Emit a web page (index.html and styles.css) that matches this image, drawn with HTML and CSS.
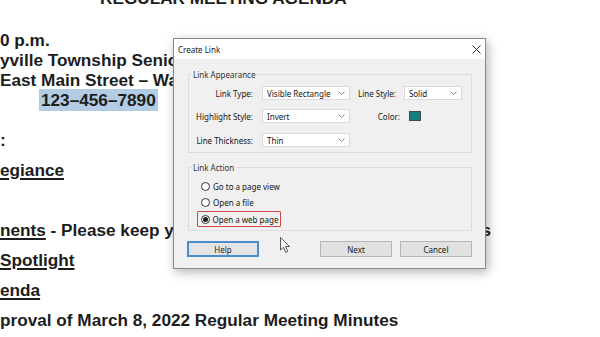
FILE: index.html
```html
<!DOCTYPE html>
<html lang="en">
<head>
    <meta charset="UTF-8">
    <meta name="viewport" content="width=device-width, initial-scale=1.0">
    <title>Create Link</title>
    <link rel="stylesheet" href="styles.css">
</head>
<body>
    <div class="doc">
        <div class="block-top">
            <p class="heading">REGULAR MEETING AGENDA</p>
            <p class="blank">&nbsp;</p>
            <p>0 p.m.</p>
            <p>yville Township Senior Center</p>
            <p>East Main Street &ndash; Waynesville, Ohio</p>
            <p><span class="phone">123&ndash;456&ndash;7890</span></p>
        </div>
        <div class="block-items">
            <p>:</p>
            <p><u>egiance</u></p>
            <p class="blank">&nbsp;</p>
            <p><u>nents</u> - Please keep your comments limited to three minutes</p>
            <p><u>Spotlight</u></p>
            <p><u>enda</u></p>
            <p>proval of March 8, 2022 Regular Meeting Minutes</p>
        </div>
    </div>

    <!-- dialog floats over the document -->
    <div class="dialog">
        <div class="titlebar">
            <span>Create Link</span>
            <svg class="close" width="9" height="9" viewBox="0 0 9 9"><path d="M0.5 0.5 L8.5 8.5 M8.5 0.5 L0.5 8.5" stroke="#333" stroke-width="1"/></svg>
        </div>
        <div class="dialog-body">
            <fieldset class="group appearance">
                <legend>Link Appearance</legend>
                <div class="row">
                    <span class="lbl">Link Type:</span>
                    <div class="select wide"><span>Visible Rectangle</span><svg width="7" height="4" viewBox="0 0 7 4"><path d="M0.5 0.5 L3.5 3.5 L6.5 0.5" fill="none" stroke="#888"/></svg></div>
                    <span class="lbl2">Line Style:</span>
                    <div class="select narrow"><span>Solid</span><svg width="7" height="4" viewBox="0 0 7 4"><path d="M0.5 0.5 L3.5 3.5 L6.5 0.5" fill="none" stroke="#888"/></svg></div>
                </div>
                <div class="row">
                    <span class="lbl">Highlight Style:</span>
                    <div class="select wide"><span>Invert</span><svg width="7" height="4" viewBox="0 0 7 4"><path d="M0.5 0.5 L3.5 3.5 L6.5 0.5" fill="none" stroke="#888"/></svg></div>
                    <span class="lbl-color">Color:</span>
                    <span class="swatch"></span>
                </div>
                <div class="row last">
                    <span class="lbl">Line Thickness:</span>
                    <div class="select wide"><span>Thin</span><svg width="7" height="4" viewBox="0 0 7 4"><path d="M0.5 0.5 L3.5 3.5 L6.5 0.5" fill="none" stroke="#888"/></svg></div>
                </div>
            </fieldset>

            <fieldset class="group action">
                <legend>Link Action</legend>
                <div class="radio"><span class="circle"></span>Go to a page view</div>
                <div class="radio"><span class="circle"></span>Open a file</div>
                <div class="radio marked"><span class="circle checked"></span>Open a web page</div>
            </fieldset>

            <div class="buttons">
                <button class="btn focused">Help</button>
                <span class="spacer"></span>
                <button class="btn">Next</button>
                <button class="btn">Cancel</button>
            </div>
        </div>
    </div>

    <svg class="cursor" width="11" height="17" viewBox="0 0 11 17"><path d="M0.5 0.5 L0.5 13 L3.5 10.2 L5.8 15.5 L7.8 14.6 L5.6 9.5 L9.5 9.5 Z" fill="#fff" stroke="#444" stroke-width="0.9" stroke-linejoin="round"/></svg>
</body>
</html>
```

FILE: styles.css
```css
/* Basic Reset */
* {
    margin: 0;
    padding: 0;
    box-sizing: border-box;
}

body {
    width: 600px;
    height: 337px;
    overflow: hidden;
    position: relative;
    background-color: #fff;
    font-family: "Liberation Sans", Arial, sans-serif;
}

/* Document behind the dialog */
.doc {
    font-size: 17.2px;
    font-weight: bold;
    color: #1d1d1d;
}

.doc p {
    white-space: nowrap;
}

.block-top {
    margin-top: -12px;
    line-height: 20px;
}

.heading {
    padding-left: 100px;
}

.block-top .blank {
    height: 22px;
}

.phone {
    margin-left: 39px;
    padding: 1px 2px;
    background-color: #b2cce4;
}

.block-items {
    margin-top: 15px;
    line-height: 30px;
}

.doc u {
    text-decoration-thickness: 1.5px;
    text-underline-offset: 2px;
}

/* Dialog */
.dialog {
    position: absolute;
    left: 173px;
    top: 38px;
    width: 313px;
    border: 1px solid #8a8a8a;
    background-color: #f0f0f0;
    box-shadow: 2px 3px 10px rgba(0, 0, 0, 0.3);
    font-family: "Noto Sans", "Open Sans", sans-serif;
    font-size: 8px;
    color: #161616;
}

.titlebar {
    height: 20px;
    display: flex;
    align-items: center;
    justify-content: space-between;
    padding: 0 4px 0 4px;
    background-color: #fff;
}

.dialog-body {
    padding: 10px 13px 11px 14px;
}

.group {
    border: 1px solid #dcdcdc;
    padding: 0;
}

.group legend {
    margin-left: 2px;
    padding: 0 2px;
    line-height: 11px;
    color: #333;
}

.appearance {
    padding-bottom: 5px;
}

.row {
    display: flex;
    align-items: center;
    height: 14px;
    margin-top: 9px;
}

.row:first-of-type {
    margin-top: 6px;
}

.row.last {
    margin-top: 10px;
}

.lbl {
    width: 64px;
    margin-right: 9px;
    text-align: right;
}

.lbl2 {
    margin-left: 8px;
    margin-right: 8px;
}

.lbl-color {
    width: 50px;
    text-align: right;
}

.select {
    height: 14px;
    display: flex;
    align-items: center;
    justify-content: space-between;
    padding: 0 4px 0 4px;
    background-color: #fff;
    border: 1px solid #dadada;
}

.select.wide {
    width: 88px;
}

.select.narrow {
    width: 58px;
}

.swatch {
    width: 12px;
    height: 10px;
    margin-left: 9px;
    background-color: #16807c;
    border: 1px solid #3a4a4a;
}

.action {
    margin-top: 9px;
    padding: 5px 0 3px 0;
}

.radio {
    display: flex;
    align-items: center;
    height: 16px;
    width: 84px;
    margin-left: 8px;
    padding-left: 4px;
}

.radio.marked {
    margin-top: 1px;
    border: 1.5px solid #d3464a;
    border-radius: 1px;
    padding-left: 2.5px;
}

.circle {
    width: 9px;
    height: 9px;
    margin-right: 3px;
    border: 1px solid #333;
    border-radius: 50%;
    background-color: #fff;
    display: flex;
    align-items: center;
    justify-content: center;
}

.circle.checked::after {
    content: "";
    width: 5px;
    height: 5px;
    border-radius: 50%;
    background-color: #1a1a1a;
}

.buttons {
    display: flex;
    margin-top: 10px;
    margin-left: -1px;
}

.spacer {
    flex: 1;
}

.btn {
    width: 72px;
    height: 16px;
    margin-left: 8px;
    font-family: inherit;
    font-size: 8px;
    color: #1a1a1a;
    background-color: #e1e1e1;
    border: 1px solid #b4b4b4;
}

.btn:first-child {
    margin-left: 0;
}

.btn.focused {
    border: 2px solid #4a8ccc;
    background-color: #e3e3e3;
}

.cursor {
    position: absolute;
    left: 280px;
    top: 237px;
}
```
